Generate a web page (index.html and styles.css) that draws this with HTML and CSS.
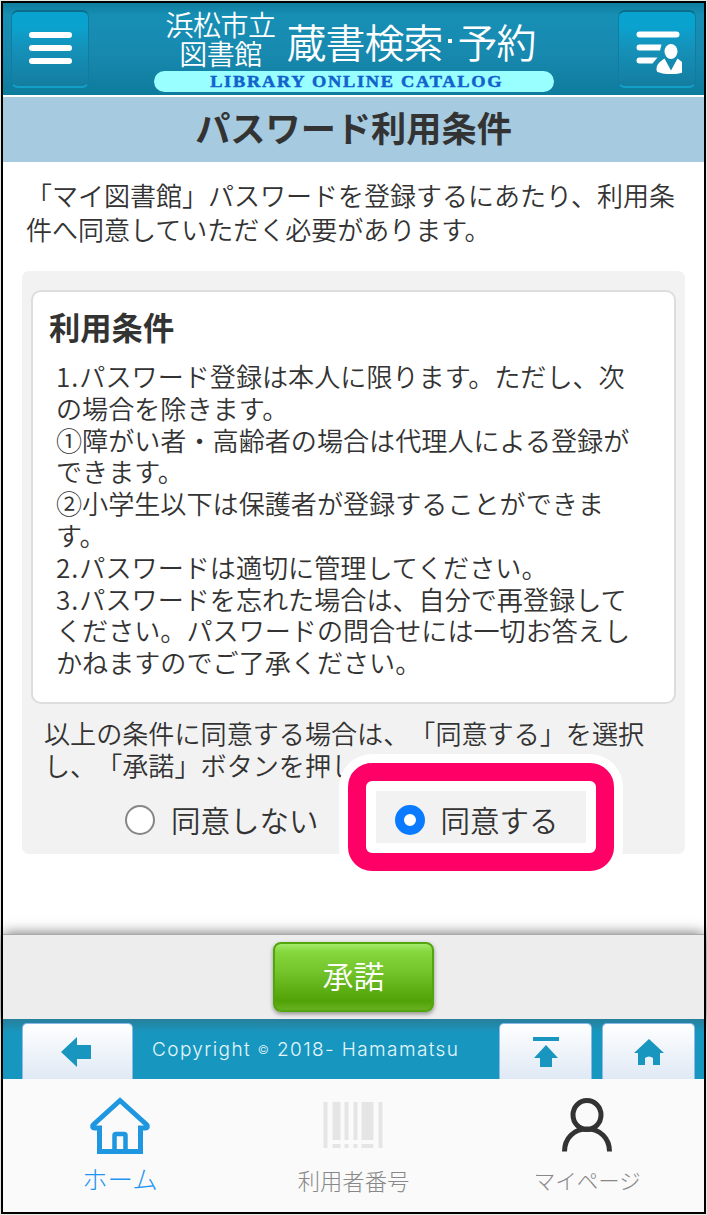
FILE: index.html
```html
<!DOCTYPE html>
<html lang="ja">
<head>
    <meta charset="UTF-8">
    <meta name="viewport" content="width=device-width, initial-scale=1.0">
    <title>パスワード利用条件</title>
    <link rel="stylesheet" href="styles.css">
</head>
<body>
<div class="page">
    <header class="header">
        <button class="header-btn" aria-label="メニュー">
            <svg width="50" height="50" viewBox="0 0 50 50" fill="#fff">
                <rect x="4" y="8" width="43" height="6" rx="3"/>
                <rect x="4" y="21" width="43" height="6" rx="3"/>
                <rect x="4" y="34" width="43" height="6" rx="3"/>
            </svg>
        </button>
        <div class="logo">
            <div class="logo-top">
                <div class="logo-name"><span>浜松市立</span><span>図書館</span></div>
                <div class="logo-title">蔵書検索<i class="dot"></i>予約</div>
            </div>
            <div class="logo-sub"><span>LIBRARY ONLINE CATALOG</span></div>
        </div>
        <button class="header-btn" aria-label="利用者メニュー">
            <svg width="50" height="54" viewBox="-4.500 1.500 50 54" fill="#fff">
                <rect x="0" y="11" width="43" height="6" rx="3"/>
                <path d="M3 24H25L23.500 30H3a3 3 0 0 1 0-6zM3 37H21L16 43H3a3 3 0 0 1 0-6z"/>
                <ellipse cx="34.500" cy="31" rx="6.500" ry="7.500"/>
                <path d="M28 38l6.500 12L41 38c4 3 8 5 8 11 0 2-1 3-3 3-4 2-19 2-23 0-2 0-3-1-3-3 0-6 4-8 8-11z"/>
            </svg>
        </button>
    </header>

    <h1 class="title">パスワード利用条件</h1>

    <main class="main">
        <p class="lead">「マイ図書館」パスワードを登録するにあたり、利用条<br>件へ同意していただく必要があります。</p>

        <div class="box">
            <div class="card">
                <h2>利用条件</h2>
                <p><span class="num">1.</span>パスワード登録は本人に限ります。ただし、次<br>
                の場合を除きます。<br>
                ①障がい者・高齢者の場合は代理人による登録が<br>
                できます。<br>
                ②小学生以下は保護者が登録することができま<br>
                す。<br>
                <span class="num">2.</span>パスワードは適切に管理してください。<br>
                <span class="num">3.</span>パスワードを忘れた場合は、自分で再登録して<br>
                ください。パスワードの問合せには一切お答えし<br>
                かねますのでご了承ください。</p>
            </div>
            <p class="note">以上の条件に同意する場合は、「同意する」を選択<br>し、「承諾」ボタンを押してください。</p>
            <div class="choices">
                <label><input type="radio" name="agree" value="0"><span>同意しない</span></label>
                <label class="marked"><input type="radio" name="agree" value="1" checked><span>同意する</span></label>
            </div>
        </div>
    </main>

    <div class="submit-bar">
        <button class="submit">承諾</button>
    </div>

    <footer class="footer">
        <a class="tab tab-back">
            <svg width="32" height="32" viewBox="0 0 32 32"><path d="M1 16L17 1v8h14v14H17v8z" fill="#1896c0"/></svg>
        </a>
        <span class="copyright">Copyright <small>©</small> 2018- Hamamatsu</span>
        <a class="tab">
            <svg width="28" height="32" viewBox="0 0 28 32" fill="#1896c0"><path d="M1 1h26v4H1zM14 9l12 13h-6v9H8v-9H2z"/></svg>
        </a>
        <a class="tab">
            <svg width="30" height="28" viewBox="0 0 30 28" fill="#1896c0"><path d="M15 1l15 14h-4v12h-7v-7q-4-3-8 0v7H4V15H0z"/></svg>
        </a>
    </footer>

    <nav class="nav">
        <a class="nav-item active">
            <svg width="62" height="60" viewBox="0 0 62 60" fill="none" stroke="#1e96e0" stroke-width="5">
                <path d="M10.500 31H5.500c-2 0-2.500-2-1.200-3.300L31 3.500l26.700 24.200c1.300 1.300.8 3.300-1.200 3.300h-5v23.500h-41z"/>
                <path d="M25.500 54V38.500c0-1 .5-1.500 1.500-1.500h8c1 0 1.500.5 1.500 1.500V54" stroke-width="4.500"/>
            </svg>
            <span>ホーム</span>
        </a>
        <a class="nav-item barcode">
            <svg width="60" height="60" viewBox="-0.500 0 60 60" fill="#e5e5e5">
                <path d="M0 5h4v46H0zM9 5h8v38H9zM21 5h4v38h-4zM30 5h4v38h-4zM38 5h12v38H38zM55 5h4v46h-4zM9 47h8v4H9zM21 47h4v4h-4zM30 47h4v4h-4zM38 47h12v4H38z"/>
            </svg>
            <span>利用者番号</span>
        </a>
        <a class="nav-item mypage">
            <svg width="54" height="60" viewBox="0 0 54 60" fill="none" stroke="#333" stroke-width="5">
                <ellipse cx="27" cy="18" rx="14" ry="14.500"/>
                <path d="M4.500 54.500C4.500 41 14 32 27 32s22.500 9 22.500 22.500"/>
            </svg>
            <span>マイページ</span>
        </a>
    </nav>
</div>
</body>
</html>
```

FILE: styles.css
```css
*, *::after {
    box-sizing: border-box;
}
body {
    margin: 0;
    padding: 1px;
    background: #e4e8e0;
    color: #333;
    font-family: "Noto Sans CJK JP", sans-serif;
    font-weight: 350;
    text-spacing-trim: space-all;
    overflow: hidden;
}
h1, h2, p {
    margin: 0;
}
button {
    font-family: inherit;
    padding: 0;
    border: none;
}
svg {
    display: block;
}
.page {
    width: 705px;
    height: 1213px;
    border: 2px solid #000;
    background: #fff;
    display: flex;
    flex-direction: column;
    white-space: nowrap;
}

/* cabecera */
.header {
    height: 92px;
    flex: none;
    display: flex;
    justify-content: space-between;
    align-items: flex-start;
    padding: 7px 8px 0;
    background: linear-gradient(#0d7d9d 0, #178fb5 14%, #1889af 55%, #0d7b9c 100%);
}
.header-btn {
    width: 78px;
    height: 78px;
    border-radius: 7px;
    background: linear-gradient(#08a3d0 0, #0aa2ce 20%, #1591b9 50%, #147da0 100%);
    border: 1px solid #117c9e;
    border-top: 2px solid #0c6c8b;
    border-bottom: 2px solid #12a0c9;
    display: flex;
    align-items: center;
    justify-content: center;
}
.logo {
    width: 400px;
    color: #fff;
}
.logo-top {
    height: 61px;
    display: flex;
    padding-left: 11px;
}
.logo-name {
    width: 112px;
    display: flex;
    flex-direction: column;
    align-items: center;
    font-size: 28px;
    letter-spacing: -0.5px;
    line-height: 29px;
}
.logo-title {
    display: flex;
    align-items: center;
    margin-left: 10px;
    font-size: 40px;
    letter-spacing: -1px;
    line-height: 62px;
}
.dot {
    width: 4px;
    height: 4px;
    margin: 0 6px 0 5px;
    background: #fff;
}
.logo-sub {
    height: 21px;
    padding-left: 7px;
    border-radius: 11px;
    background: #9ff;
    color: #1262cc;
    display: flex;
    justify-content: center;
    font: bold 17px/21px "Liberation Serif", serif;
    letter-spacing: 1.6px;
    -webkit-text-stroke: 0.5px #1262cc;
}
.logo-sub span {
    transform: scaleX(1.08);
}

.title {
    height: 67px;
    flex: none;
    border-top: 2px solid #fff;
    background: #a6cadf;
    text-align: center;
    font-size: 35.2px;
    font-weight: 700;
    line-height: 60px;
}

.main {
    height: 772px;
    flex: none;
    padding: 16px 19px 0;
}
.lead {
    padding-left: 4px;
    font-size: 26px;
    line-height: 33.5px;
}
.box {
    width: 663px;
    height: 583px;
    margin-top: 26px;
    padding: 19px 9px 0;
    border-radius: 7px;
    background: #f2f2f2;
}
.card {
    height: 414px;
    padding: 12px 16px 0;
    border: 2px solid #ddd;
    border-radius: 10px;
    background: #fff;
}
.card h2 {
    font-size: 31.3px;
    line-height: 46px;
}
.card p {
    padding: 11px 0 0 7px;
    font-size: 26.1px;
    line-height: 31.8px;
}
.num {
    letter-spacing: 1px;
}
.note {
    padding: 13px 0 0 13px;
    font-size: 26.1px;
    line-height: 32px;
}
.choices {
    display: flex;
    align-items: center;
    height: 72px;
    margin-top: 3px;
    padding-left: 94px;
    font-size: 29.5px;
}
.choices label {
    display: flex;
    align-items: center;
}
.choices label span {
    margin-top: -3px;
}
.choices input {
    appearance: none;
    width: 30px;
    height: 30px;
    margin: 0 16px 0 0;
    border: 2px solid #85858a;
    border-radius: 50%;
    background: #fff;
}
.choices input:checked {
    border: 9px solid #0a7aff;
}
.choices .marked {
    position: relative;
    margin-left: 76px;
}
/* marco rosa sobre la opción elegida */
.marked::after {
    content: "";
    position: absolute;
    left: -47px;
    top: 50%;
    width: 266px;
    height: 108px;
    margin-top: -57px;
    border: 18px solid #ff0066;
    border-radius: 24px;
    box-shadow: 0 0 0 9px #fff, inset 0 0 0 10px #fff;
}

.submit-bar {
    position: relative;
    height: 85px;
    flex: none;
    display: flex;
    justify-content: center;
    align-items: flex-start;
    padding-top: 7px;
    background: #ededed;
    border-top: 1px solid #aaa;
    box-shadow: 0 0 13px rgba(0, 0, 0, 0.6);
}
.submit {
    width: 161px;
    height: 70px;
    border: 2px solid #51a50d;
    border-radius: 8px;
    background: linear-gradient(#a4ea6b 0, #84d73d 12%, #75c52c 40%, #50a206 86%, #67b022 100%);
    box-shadow: 0 2px 4px rgba(0, 0, 0, 0.4);
    color: #fff;
    font-size: 31px;
    font-weight: 350;
    line-height: 60px;
    padding-bottom: 4px;
}

.footer {
    height: 60px;
    flex: none;
    display: flex;
    align-items: flex-end;
    padding: 0 9px 0 19px;
    background: linear-gradient(#287f9b 0, #1797c0 14px);
    position: relative;
}
.tab {
    width: 93px;
    height: 56px;
    margin-left: 10px;
    display: flex;
    align-items: center;
    justify-content: center;
    border: 1px solid #8cb8ea;
    border-bottom: none;
    border-radius: 5px 5px 0 0;
    background: linear-gradient(#fff, #dfe9f5);
}
.tab-back {
    width: 111px;
    margin-left: 0;
    padding-right: 4px;
}
.copyright {
    flex: 1;
    padding-left: 19px;
    color: #e4f6fb;
    font-family: Inter, "Liberation Sans", sans-serif;
    font-size: 19px;
    font-weight: 300;
    letter-spacing: 1.4px;
    line-height: 59px;
}
.copyright small {
    font-size: 12px;
    vertical-align: 2px;
}

.nav {
    flex: 1;
    display: grid;
    grid-template-columns: 1fr 1fr 1fr;
    background: #fafafa;
    color: #888;
}
.nav-item {
    display: flex;
    flex-direction: column;
    align-items: center;
    padding-top: 18px;
    font-size: 22.3px;
    font-weight: 300;
    line-height: 46px;
}
.active {
    color: #1e96f0;
    font-size: 25.5px;
    line-height: 42px;
}
.mypage {
    font-size: 21.5px;
}
```
